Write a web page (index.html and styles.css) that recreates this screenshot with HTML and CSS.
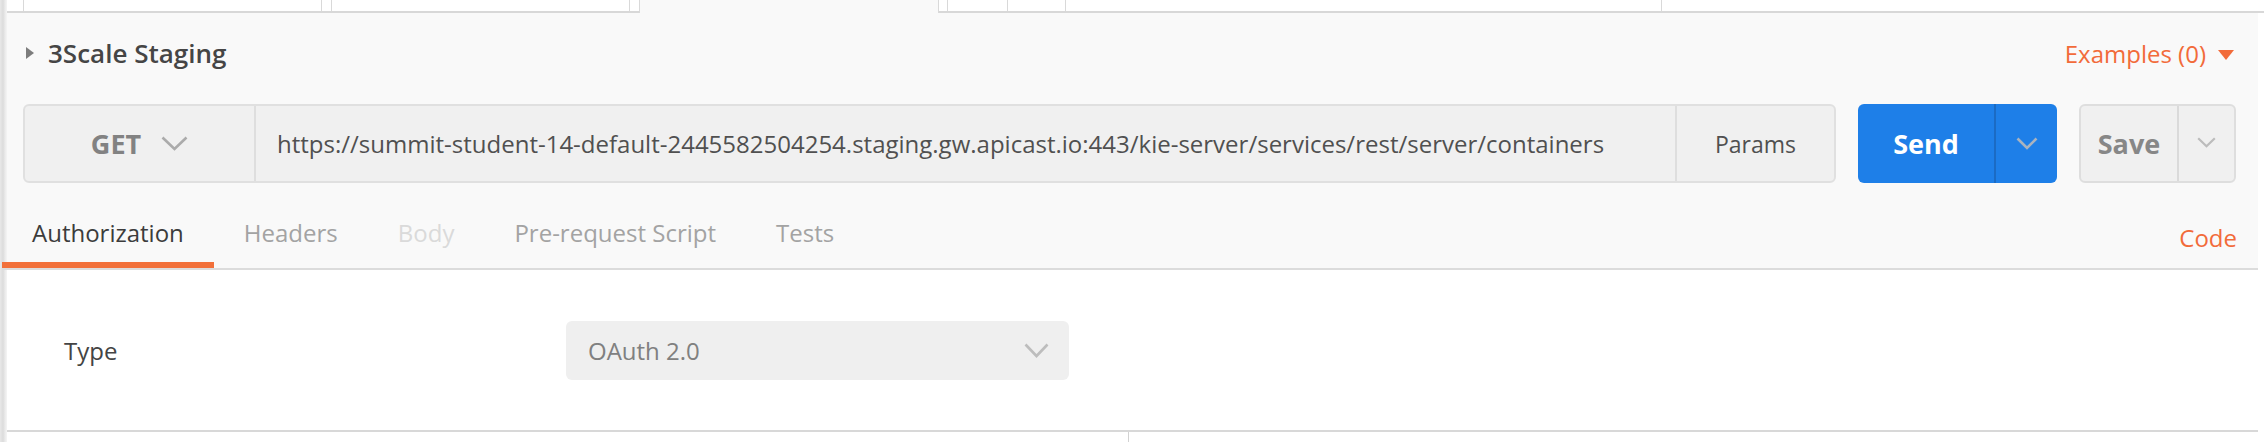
FILE: index.html
```html
<!DOCTYPE html>
<html>
<head>
<meta charset="utf-8">
<title>Request</title>
<link rel="stylesheet" href="styles.css">
</head>
<body>
<div class="edge"></div>
<div class="app">
  <div class="topstrip">
    <div class="ttab t1"></div>
    <div class="ttab t2"></div>
    <div class="ttab active"></div>
    <div class="ttab t4"></div>
    <div class="ttab t5"></div>
    <div class="ttab t6"></div>
    <div class="ttab t7"></div>
  </div>
  <div class="workspace">
    <div class="pane">
      <div class="header">
        <div class="title"><span class="caret"></span><span>3Scale Staging</span></div>
        <div class="examples"><span>Examples (0)</span><span class="down-tri"></span></div>
      </div>
      <div class="request">
        <div class="urlbar">
          <div class="method">
            <span>GET</span>
            <svg class="chev-get" width="27" height="15" viewBox="0 0 27 15"><polyline points="1.5,1.5 13.5,13 25.5,1.5" fill="none" stroke="#ababab" stroke-width="2.6"/></svg>
          </div>
          <div class="url">https://summit-student-14-default-2445582504254.staging.gw.apicast.io:443/kie-server/services/rest/server/containers</div>
          <div class="params">Params</div>
        </div>
        <div class="send">
          <div class="send-main">Send</div>
          <div class="send-drop">
            <svg width="22" height="13" viewBox="0 0 22 13"><polyline points="1.5,1.5 11,11 20.5,1.5" fill="none" stroke="#a9b3bf" stroke-width="2.6"/></svg>
          </div>
        </div>
        <div class="save">
          <div class="save-main">Save</div>
          <div class="save-drop">
            <svg width="19" height="11" viewBox="0 0 19 11"><polyline points="1.2,1.2 9.5,9.3 17.8,1.2" fill="none" stroke="#bcbcbc" stroke-width="2.2"/></svg>
          </div>
        </div>
      </div>
      <div class="tabs">
        <div class="tab active-tab">Authorization</div>
        <div class="tab">Headers</div>
        <div class="tab disabled">Body</div>
        <div class="tab">Pre-request Script</div>
        <div class="tab">Tests</div>
        <div class="code">Code</div>
      </div>
      <div class="auth">
        <div class="label">Type</div>
        <div class="select">
          <span>OAuth 2.0</span>
          <svg width="25" height="15" viewBox="0 0 25 15"><polyline points="1.5,1.5 12.5,13 23.5,1.5" fill="none" stroke="#bdbdbd" stroke-width="2.6"/></svg>
        </div>
      </div>
      <div class="footer">
        <div class="footer-left"></div>
        <div class="footer-right"></div>
      </div>
    </div>
    <div class="gutter"></div>
  </div>
</div>
</body>
</html>
```

FILE: styles.css
```css
* { box-sizing: border-box; }
html, body {
  margin: 0;
  padding: 0;
}
body {
  width: 2264px;
  height: 442px;
  display: flex;
  background: #ffffff;
  font-family: "Open Sans", "Liberation Sans", sans-serif;
  overflow: hidden;
}
.edge {
  width: 7px;
  flex: none;
  background: linear-gradient(to right, #e8e8e8 0, #dcdcdc 3px, #eaeaea 5px, #f5f5f5 7px);
}
.app {
  flex: 1;
  display: flex;
  flex-direction: column;
  min-width: 0;
}
.topstrip {
  height: 13px;
  flex: none;
  display: flex;
  padding-left: 16px;
  background: #ffffff;
  border-bottom: 2px solid #d8d8d8;
}
.ttab {
  height: 11px;
  border-right: 1px solid #d9d9d9;
}
.t1, .t2 {
  width: 299px;
  border-left: 1px solid #d9d9d9;
  margin-right: 9px;
}
.active {
  width: 300px;
  height: 13px;
  margin-bottom: -2px;
  margin-right: 8px;
  background: #f9f9f9;
  border-left: 1px solid #d9d9d9;
  position: relative;
}
.t4 { width: 61px; border-left: 1px solid #d9d9d9; }
.t5 { width: 58px; }
.t6 { width: 596px; }
.t7 { flex: 1; border-right: none; }

.workspace {
  flex: 1;
  display: flex;
}
.pane {
  flex: 1;
  display: flex;
  flex-direction: column;
  background: #f9f9f9;
}
.gutter {
  width: 6px;
  flex: none;
  background: #ffffff;
}
.header {
  height: 80px;
  flex: none;
  display: flex;
  align-items: center;
  justify-content: space-between;
  padding: 0 24px 0 19px;
}
.title {
  display: flex;
  align-items: center;
  font-size: 26px;
  font-weight: 600;
  color: #454545;
}
.caret {
  width: 0;
  height: 0;
  border-left: 8px solid #7d7d7d;
  border-top: 6px solid transparent;
  border-bottom: 6px solid transparent;
  margin-right: 14px;
}
.examples {
  display: flex;
  align-items: center;
  font-size: 24px;
  color: #f26b3a;
}
.down-tri {
  width: 0;
  height: 0;
  margin-left: 12px;
  margin-top: 4px;
  border-top: 10px solid #f26b3a;
  border-left: 8px solid transparent;
  border-right: 8px solid transparent;
}
.request {
  margin-top: 11px;
  height: 79px;
  flex: none;
  display: flex;
  gap: 22px;
  padding: 0 22px 0 16px;
}
.urlbar {
  flex: 1;
  display: flex;
  background: #f0f0f0;
  border: 2px solid #e0e0e0;
  border-radius: 6px;
  min-width: 0;
}
.method {
  width: 231px;
  flex: none;
  display: flex;
  align-items: center;
  justify-content: center;
  gap: 20px;
  border-right: 2px solid #dedede;
  font-size: 27px;
  font-weight: 700;
  color: #828282;
}
.url {
  flex: 1;
  display: flex;
  align-items: center;
  padding-left: 21px;
  font-size: 24px;
  color: #505050;
  white-space: nowrap;
  overflow: hidden;
}
.params {
  width: 159px;
  flex: none;
  display: flex;
  align-items: center;
  justify-content: center;
  border-left: 2px solid #dedede;
  font-size: 23px;
  color: #505050;
}
.send {
  width: 199px;
  flex: none;
  display: flex;
  background: #1e7fe8;
  border-radius: 6px;
}
.send-main {
  flex: 1;
  display: flex;
  align-items: center;
  justify-content: center;
  border-right: 2px solid #1b6bc4;
  font-size: 27px;
  font-weight: 700;
  color: #ffffff;
}
.send-drop {
  width: 61px;
  flex: none;
  display: flex;
  align-items: center;
  justify-content: center;
}
.save {
  width: 157px;
  flex: none;
  display: flex;
  background: #f0f0f0;
  border: 2px solid #dedede;
  border-radius: 6px;
}
.save-main {
  width: 98px;
  flex: none;
  display: flex;
  align-items: center;
  justify-content: center;
  border-right: 2px solid #dadada;
  font-size: 27px;
  font-weight: 700;
  color: #878787;
}
.save-drop {
  flex: 1;
  display: flex;
  align-items: center;
  justify-content: center;
  padding-bottom: 3px;
}
.tabs {
  margin-top: 20px;
  margin-left: -5px;
  flex: none;
  display: flex;
  border-bottom: 2px solid #dcdcdc;
}
.tab {
  height: 65px;
  line-height: 59px;
  padding: 0 30px;
  font-size: 24px;
  color: #a3a3a3;
  border-bottom: 6px solid transparent;
  white-space: nowrap;
}
.active-tab {
  color: #3c3c3c;
  border-bottom-color: #f2703a;
}
.disabled {
  color: #dadada;
}
.code {
  margin-left: auto;
  margin-right: 21px;
  padding-top: 10px;
  line-height: 49px;
  font-size: 24px;
  color: #f26b3a;
}
.auth {
  height: 160px;
  flex: none;
  display: flex;
  align-items: center;
  padding-left: 57px;
  background: #ffffff;
}
.label {
  width: 502px;
  flex: none;
  font-size: 24px;
  color: #444444;
}
.select {
  width: 503px;
  height: 59px;
  display: flex;
  align-items: center;
  justify-content: space-between;
  padding: 0 20px 0 22px;
  background: #efefef;
  border-radius: 6px;
  font-size: 24px;
  color: #808080;
}
.footer {
  flex: 1;
  display: flex;
  background: #ffffff;
  border-top: 2px solid #d8d8d8;
}
.footer-left {
  width: 1122px;
  border-right: 1px solid #d2d2d2;
}
.footer-right {
  flex: 1;
}
```
